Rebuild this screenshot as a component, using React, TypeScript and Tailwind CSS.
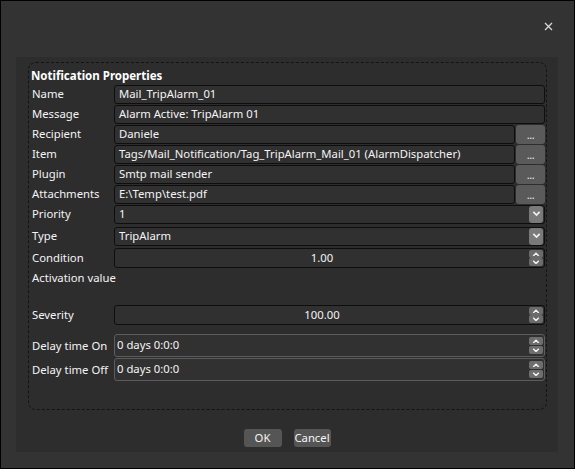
import React from 'react'

const font = { fontFamily: '"Noto Sans", "Open Sans", Arial, sans-serif' }

function Chevron({ up = false, size = 9 }: { up?: boolean; size?: number }) {
  return (
    <svg width={size} height={size * 0.6} viewBox="0 0 10 6" className="block">
      <path
        d={up ? 'M1.5 5 L5 1.5 L8.5 5' : 'M1.5 1 L5 4.5 L8.5 1'}
        fill="none"
        stroke="#f2f2f2"
        strokeWidth="1.8"
      />
    </svg>
  )
}

function Label({ children }: { children: React.ReactNode }) {
  return <div className="w-[84px] shrink-0 pl-[2px] text-[11.3px] text-[#f4f4f4] leading-none whitespace-nowrap">{children}</div>
}

function TextRow({ label, value, browse = false }: { label: string; value: string; browse?: boolean }) {
  return (
    <div className="flex items-center h-[20px]">
      <Label>{label}</Label>
      <div className="flex-1 flex h-[19px] gap-[1px]">
        <div className="flex-1 flex items-center h-full rounded-[3px] border border-[#0e0e0e] bg-[#303030] pl-[4px] text-[11.3px] text-[#f4f4f4] whitespace-nowrap overflow-hidden">
          {value}
        </div>
        {browse && (
          <div className="w-[29px] h-[19px] rounded-[3px] bg-[#5a5a5a] flex items-end justify-center pb-[4px]">
            <span className="text-[11px] leading-none text-[#eee] tracking-[-0.5px]">...</span>
          </div>
        )}
      </div>
    </div>
  )
}

function SelectRow({ label, value, mt }: { label: string; value: string; mt: string }) {
  return (
    <div className={`flex items-center h-[20px] ${mt}`}>
      <Label>{label}</Label>
      <div className="flex-1 flex items-center justify-between h-[19px] rounded-[3px] border border-[#0e0e0e] bg-[#303030] pl-[4px] pr-[1px] text-[11.3px] text-[#f4f4f4]">
        <span>{value}</span>
        <div className="w-[14px] h-[17px] rounded-[3px] bg-[#7a7a7a] flex items-center justify-center">
          <Chevron />
        </div>
      </div>
    </div>
  )
}

function Spinners({ bg }: { bg: string }) {
  return (
    <div className="flex flex-col justify-between h-full py-[1px] pr-[1px]">
      <div className={`w-[14px] h-[8px] rounded-[2px] ${bg} flex items-center justify-center`}>
        <Chevron up size={8} />
      </div>
      <div className={`w-[14px] h-[8px] rounded-[2px] ${bg} flex items-center justify-center`}>
        <Chevron size={8} />
      </div>
    </div>
  )
}

function NumberRow({ label, value, mt }: { label: string; value: string; mt: string }) {
  return (
    <div className={`flex items-center h-[20px] ${mt}`}>
      <Label>{label}</Label>
      <div className="flex-1 flex items-center h-[20px] rounded-[3px] border border-[#0e0e0e] bg-[#303030] text-[11.3px] text-[#f4f4f4]">
        <div className="flex-1 text-center">{value}</div>
        <Spinners bg="bg-[#6b6b6b]" />
      </div>
    </div>
  )
}

function DelayRow({ label, value, mt }: { label: string; value: string; mt: string }) {
  return (
    <div className={`flex items-center h-[23px] ${mt}`}>
      <Label>{label}</Label>
      <div className="flex-1 flex items-center h-[23px] rounded-[3px] border border-[#5c5c5c] bg-[#313131] pl-[2px] text-[11.3px] text-[#f4f4f4]">
        <div className="flex-1">{value}</div>
        <div className="h-full py-[1px]">
          <Spinners bg="bg-[#6e6e6e]" />
        </div>
      </div>
    </div>
  )
}

export default function App() {
  return (
    <div className="w-[575px] h-[469px] bg-[#333333] border border-black flex flex-col" style={font}>
      <div className="h-[56px] shrink-0 flex justify-end pt-[21px] pr-[21px]">
        <svg width="9" height="9" viewBox="0 0 9 9">
          <path d="M1 1 L8 8 M8 1 L1 8" stroke="#d8d8d8" strokeWidth="1.3" />
        </svg>
      </div>
      <div className="ml-[15px] mr-[16px] h-[395px] bg-[#2d2d2d] flex flex-col px-[12px] pt-[5px]">
        <div className="mr-[-1px] h-[348px] border border-dashed border-[#141414] rounded-[8px] px-[1px] pt-[4px] flex flex-col">
          <div className="h-[17px] flex items-center pl-[1px] text-[11.5px] font-bold text-white">Notification Properties</div>
          <TextRow label="Name" value="Mail_TripAlarm_01" />
          <TextRow label="Message" value="Alarm Active: TripAlarm 01" />
          <TextRow label="Recipient" value="Daniele" browse />
          <TextRow label="Item" value="Tags/Mail_Notification/Tag_TripAlarm_Mail_01 (AlarmDispatcher)" browse />
          <TextRow label="Plugin" value="Smtp mail sender" browse />
          <TextRow label="Attachments" value="E:\Temp\test.pdf" browse />
          <SelectRow label="Priority" value="1" mt="mt-0" />
          <SelectRow label="Type" value="TripAlarm" mt="mt-[2px]" />
          <NumberRow label="Condition" value="1.00" mt="mt-[2px]" />
          <div className="h-[18px] mt-[1px] flex items-center pl-[2px] text-[11.3px] text-[#f4f4f4]">Activation value</div>
          <NumberRow label="Severity" value="100.00" mt="mt-[18px]" />
          <DelayRow label="Delay time On" value="0 days 0:0:0" mt="mt-[9px]" />
          <DelayRow label="Delay time Off" value="0 days 0:0:0" mt="mt-[1px]" />
        </div>
        <div className="flex justify-center gap-[12px] mt-[19px]">
          <button className="w-[38px] h-[18px] rounded-[3px] bg-[#555555] text-[11.3px] text-[#f4f4f4] leading-none">OK</button>
          <button className="w-[37px] h-[18px] rounded-[3px] bg-[#555555] text-[11.3px] text-[#f4f4f4] leading-none">Cancel</button>
        </div>
      </div>
    </div>
  )
}
